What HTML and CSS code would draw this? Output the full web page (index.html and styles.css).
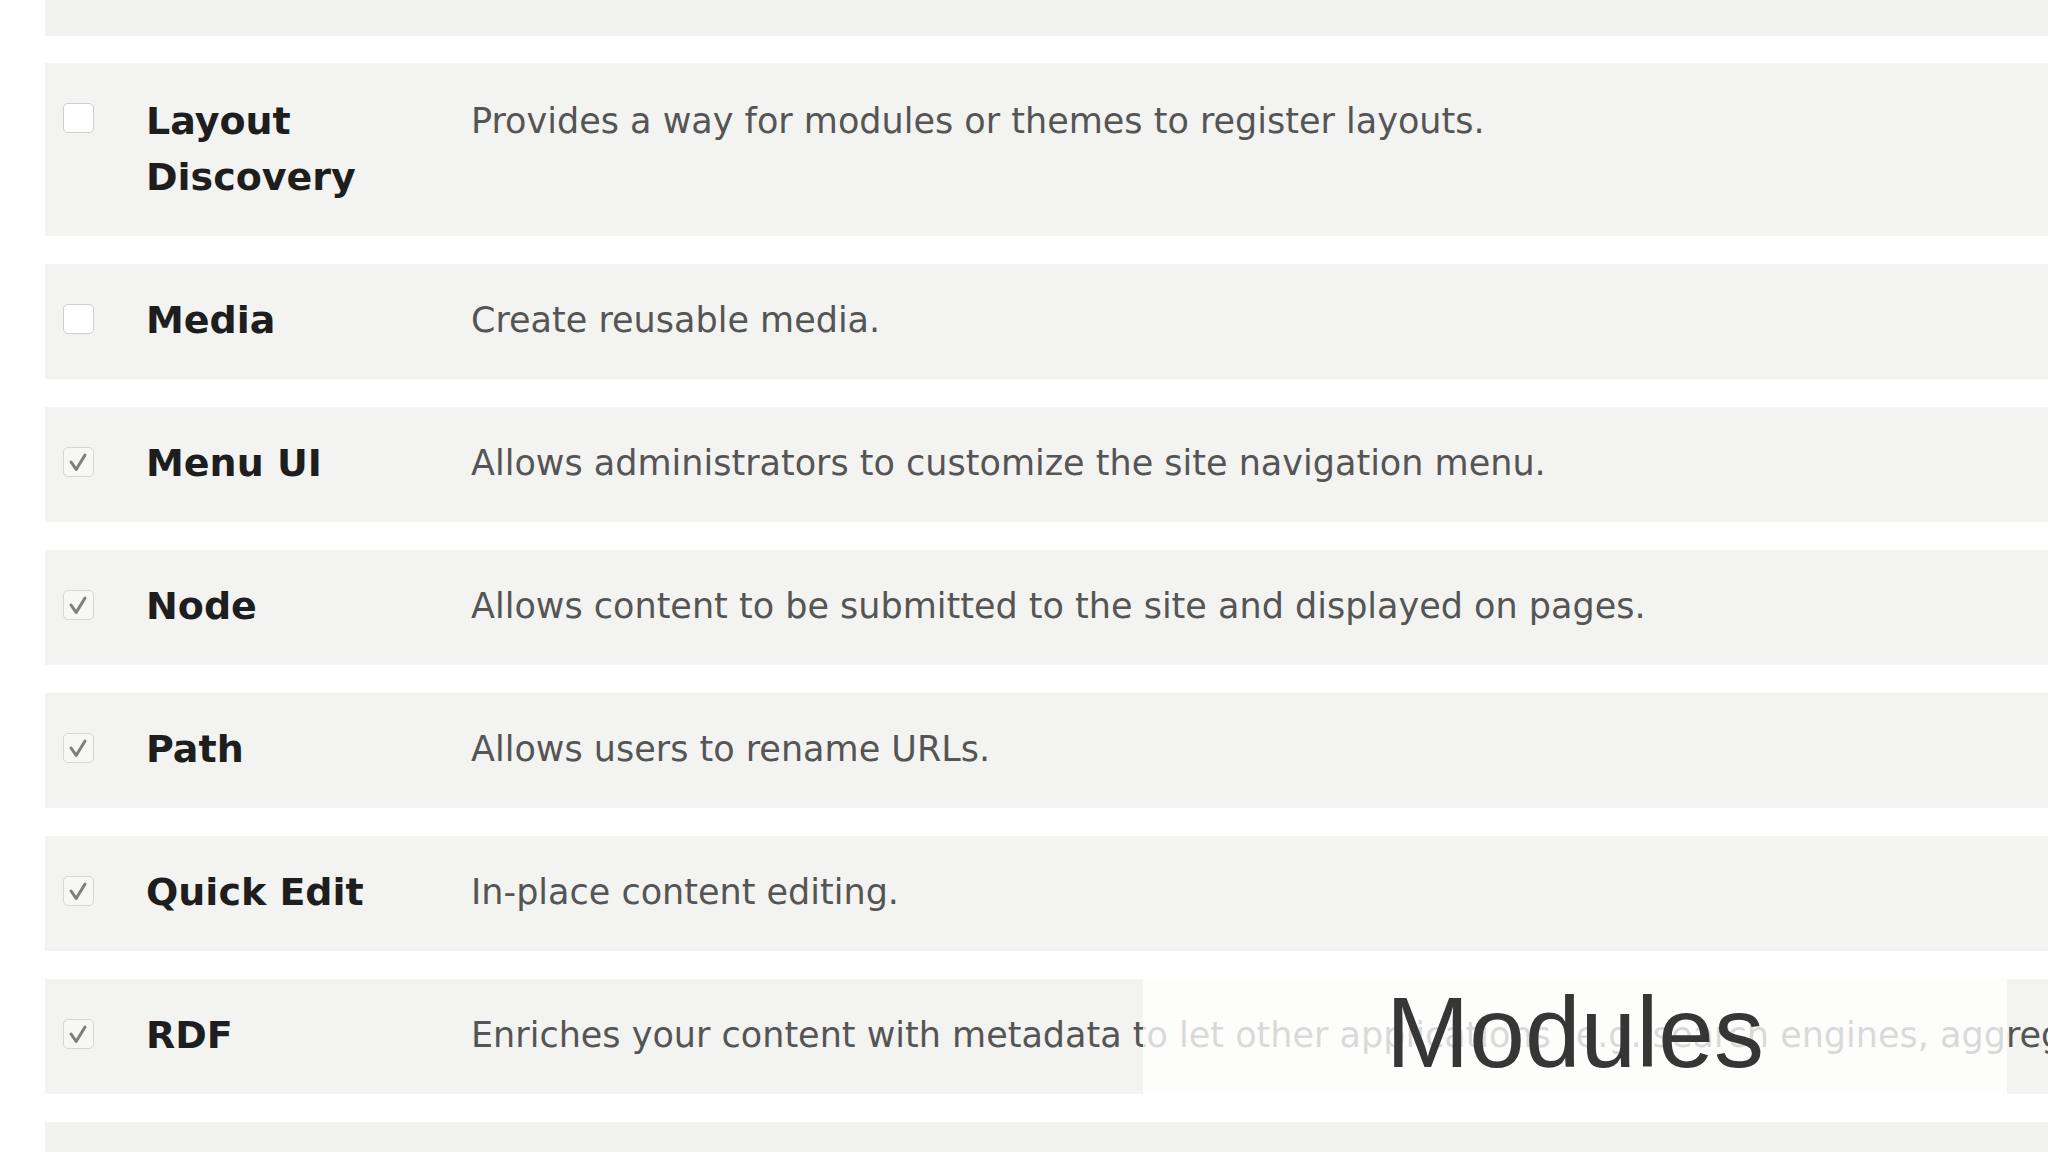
FILE: index.html
```html
<!DOCTYPE html>
<html lang="en">
<head>
<meta charset="utf-8">
<title>Modules</title>
<link rel="stylesheet" href="styles.css">
</head>
<body>
<div class="list">
  <div class="row stub"></div>
  <div class="row tall">
    <span class="check"></span>
    <div class="name">Layout Discovery</div>
    <div class="desc">Provides a way for modules or themes to register layouts.</div>
  </div>
  <div class="row">
    <span class="check"></span>
    <div class="name">Media</div>
    <div class="desc">Create reusable media.</div>
  </div>
  <div class="row">
    <span class="check checked"><svg viewBox="0 0 30 30"><path d="M7 15 L12.5 23 L22 7.5"/></svg></span>
    <div class="name">Menu UI</div>
    <div class="desc">Allows administrators to customize the site navigation menu.</div>
  </div>
  <div class="row">
    <span class="check checked"><svg viewBox="0 0 30 30"><path d="M7 15 L12.5 23 L22 7.5"/></svg></span>
    <div class="name">Node</div>
    <div class="desc">Allows content to be submitted to the site and displayed on pages.</div>
  </div>
  <div class="row">
    <span class="check checked"><svg viewBox="0 0 30 30"><path d="M7 15 L12.5 23 L22 7.5"/></svg></span>
    <div class="name">Path</div>
    <div class="desc">Allows users to rename URLs.</div>
  </div>
  <div class="row">
    <span class="check checked"><svg viewBox="0 0 30 30"><path d="M7 15 L12.5 23 L22 7.5"/></svg></span>
    <div class="name">Quick Edit</div>
    <div class="desc">In-place content editing.</div>
  </div>
  <div class="row">
    <span class="check checked"><svg viewBox="0 0 30 30"><path d="M7 15 L12.5 23 L22 7.5"/></svg></span>
    <div class="name">RDF</div>
    <div class="desc">Enriches your content with metadata to let other applications (e.g. search engines, aggregators) better understand its relationships and attributes.</div>
  </div>
  <div class="row stub"></div>
</div>
<div class="caption"><span>Modules</span></div>
</body>
</html>
```
FILE: styles.css
```css
html, body {
  margin: 0;
  padding: 0;
  background: #ffffff;
  overflow: hidden;
  width: 2048px;
  height: 1152px;
}

.list {
  display: flex;
  flex-direction: column;
  gap: 28px;
  padding-left: 45px;
}

.row {
  display: flex;
  align-items: flex-start;
  background: #f3f3f1;
  padding: 28px 0 31px 18px;
  white-space: nowrap;
  overflow: hidden;
}

.row.tall {
  padding-top: 30px;
  padding-bottom: 31px;
}

.row.stub {
  height: 36px;
  padding: 0;
  margin-bottom: -1px;
  background: #f2f3f1;
}

.check {
  flex: none;
  width: 29px;
  height: 28px;
  margin-top: 12px;
  margin-right: 52px;
  border: 1.5px solid #cfcfcf;
  border-radius: 5px;
  background: #ffffff;
  box-sizing: content-box;
}

.row.tall .check {
  margin-top: 10px;
}

.check.checked {
  background: #f7f7f6;
  border-color: #d6d6d6;
}

.check svg {
  display: block;
  width: 29px;
  height: 28px;
}

.check path {
  fill: none;
  stroke: #7e7e7e;
  stroke-width: 3.2;
  stroke-linecap: round;
  stroke-linejoin: round;
}

.name {
  flex: none;
  width: 300px;
  margin-right: 25px;
  white-space: normal;
  font-family: "DejaVu Sans", "Liberation Sans", sans-serif;
  font-weight: bold;
  font-size: 38px;
  line-height: 56px;
  color: #1e1e1e;
}

.desc {
  font-family: "DejaVu Sans", "Liberation Sans", sans-serif;
  font-size: 35px;
  line-height: 56px;
  color: #555555;
}

.caption {
  position: absolute;
  left: 1143px;
  top: 954px;
  width: 864px;
  height: 166px;
  background: rgba(255, 255, 255, 0.78);
  display: flex;
  align-items: center;
  justify-content: center;
  box-sizing: border-box;
  padding-bottom: 10px;
}

.caption span {
  font-family: "Liberation Sans", Arial, sans-serif;
  font-size: 100px;
  line-height: 1;
  color: #363636;
}
```
